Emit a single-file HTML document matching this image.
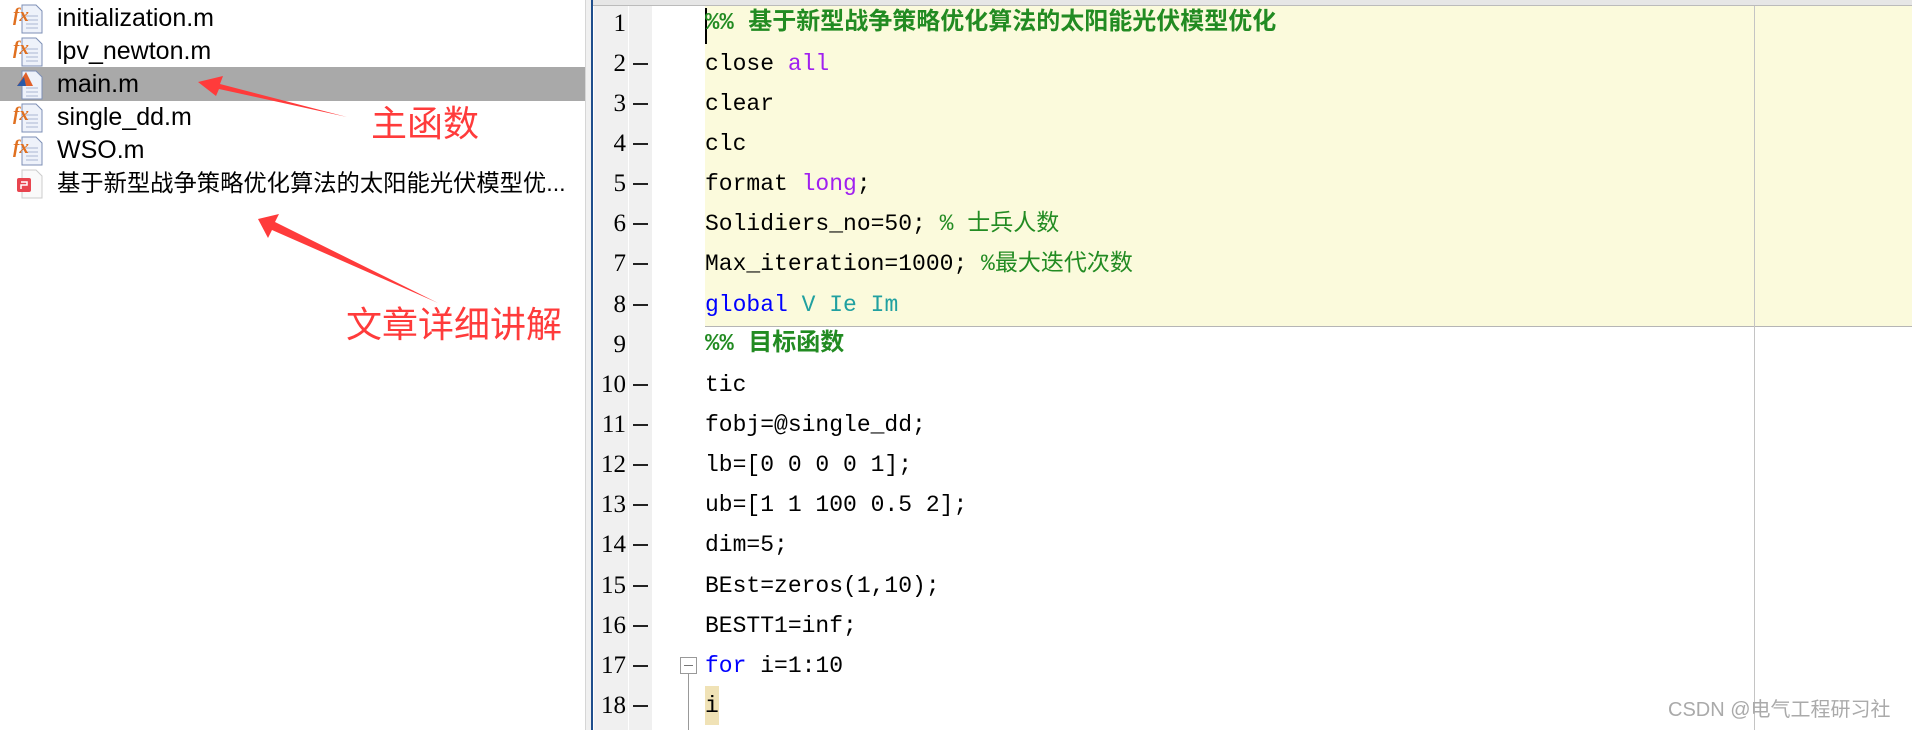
<!DOCTYPE html>
<html><head><meta charset="utf-8"><style>
*{margin:0;padding:0;box-sizing:border-box}
body{width:1912px;height:730px;overflow:hidden;background:#fff;position:relative;font-family:"Liberation Sans","Noto Sans CJK SC",sans-serif}
.abs{position:absolute}
.row{position:absolute;left:0;width:586px;height:33px;font-size:25px;line-height:33px;color:#000}
.row span{position:absolute;left:57px;top:0;white-space:nowrap}
.ico{position:absolute;left:13px;top:1px;width:32px;height:32px}
.ln{position:absolute;left:594px;width:32px;text-align:right;font-family:"Liberation Serif","Noto Serif CJK SC",serif;font-size:25px;height:40px;line-height:40px}
.dash{position:absolute;left:633px;width:15px;height:2px;background:#222}
.code{position:absolute;left:705px;font-family:"Liberation Mono","Noto Sans CJK SC",monospace;font-size:23px;height:40px;line-height:40px;white-space:pre;color:#000}
.g{color:#228B22}.p{color:#A020F0}.b{color:#0000FF}.t{color:#20A0A0}
</style></head><body>
<div class="abs" style="left:0;top:67px;width:586px;height:34px;background:#a9a9a9"></div>
<div class="abs" style="left:585px;top:0;width:1px;height:730px;background:#d6d6d6"></div>
<div class="abs" style="left:586px;top:0;width:5px;height:730px;background:#f0f0f0"></div>
<div class="abs" style="left:591px;top:0;width:2px;height:730px;background:#1f4e8c"></div>

<svg width="0" height="0" style="position:absolute"><defs>
<g id="fx"><path d="M9 2h14l6 6v22H9z" fill="#eef2fa" stroke="#7d8fb5"/><path d="M13 13h12M13 17h12M13 21h12M13 25h12" stroke="#a9b6d3"/><text x="0" y="18" font-family="Liberation Serif" font-style="italic" font-weight="bold" font-size="19" fill="#e07020">fx</text></g>
</defs></svg>

<div class="row" style="top:2px"><svg class="ico"><use href="#fx"/></svg><span>initialization.m</span></div>
<div class="row" style="top:35px"><svg class="ico"><use href="#fx"/></svg><span>lpv_newton.m</span></div>
<div class="row" style="top:68px"><svg class="ico"><path d="M9 2h14l6 6v22H9z" fill="#eef2fa" stroke="#7d8fb5"/><path d="M13 19h12M13 23h12M13 27h12" stroke="#a9b6d3"/><path d="M4 17L13 3l7 14z" fill="#e0602a"/><path d="M4 17L11 8l2 9z" fill="#2a5aa8"/></svg><span>main.m</span></div>
<div class="row" style="top:101px"><svg class="ico"><use href="#fx"/></svg><span>single_dd.m</span></div>
<div class="row" style="top:134px"><svg class="ico"><use href="#fx"/></svg><span>WSO.m</span></div>
<div class="row" style="top:167px"><svg class="ico"><path d="M9 2h14l6 6v22H9z" fill="#fafafa" stroke="#ccc"/><rect x="4" y="10" width="14" height="14" rx="2" fill="#e8454f"/><path d="M8 14h6v3h-6v4" stroke="#fff" fill="none" stroke-width="1.5"/></svg><span style="font-size:23.3px">基于新型战争策略优化算法的太阳能光伏模型优...</span></div>

<svg class="abs" style="left:0;top:0" width="590" height="360">
<path d="M347 117 L220 84 L223 76 L198 82 L216 96 L219 89 Z" fill="#ff3b3b"/>
<path d="M438 303 L275 222 L279 214 L258 219 L268 238 L272 230 Z" fill="#ff3b3b"/>
</svg>
<div class="abs" style="left:371px;top:99px;font-size:36px;line-height:44px;color:#ff3b3b;font-family:'Noto Sans CJK SC',sans-serif">主函数</div>
<div class="abs" style="left:346px;top:300px;font-size:36px;line-height:44px;color:#ff3b3b;font-family:'Noto Sans CJK SC',sans-serif">文章详细讲解</div>

<div class="abs" style="left:593px;top:0;width:1319px;height:6px;background:#e6e6e6;border-bottom:1px solid #bbb"></div>
<div class="abs" style="left:594px;top:6px;width:58px;height:724px;background:#f0f0f0"></div>
<div class="abs" style="left:628px;top:6px;width:1px;height:724px;background:#fff"></div>
<div class="abs" style="left:705px;top:6px;width:1207px;height:321px;background:#fbfadc;border-bottom:1px solid #b5b5b5"></div>
<div class="abs" style="left:1754px;top:6px;width:1px;height:724px;background:#c4c4c4"></div>
<div class="abs" style="left:705px;top:8px;width:2px;height:36px;background:#000"></div>

<div class="ln" style="top:4px">1</div>
<div class="ln" style="top:44px">2</div><div class="dash" style="top:63px"></div>
<div class="ln" style="top:84px">3</div><div class="dash" style="top:103px"></div>
<div class="ln" style="top:124px">4</div><div class="dash" style="top:143px"></div>
<div class="ln" style="top:164px">5</div><div class="dash" style="top:183px"></div>
<div class="ln" style="top:204px">6</div><div class="dash" style="top:223px"></div>
<div class="ln" style="top:244px">7</div><div class="dash" style="top:263px"></div>
<div class="ln" style="top:285px">8</div><div class="dash" style="top:304px"></div>
<div class="ln" style="top:325px">9</div>
<div class="ln" style="top:365px">10</div><div class="dash" style="top:384px"></div>
<div class="ln" style="top:405px">11</div><div class="dash" style="top:424px"></div>
<div class="ln" style="top:445px">12</div><div class="dash" style="top:464px"></div>
<div class="ln" style="top:485px">13</div><div class="dash" style="top:504px"></div>
<div class="ln" style="top:525px">14</div><div class="dash" style="top:544px"></div>
<div class="ln" style="top:566px">15</div><div class="dash" style="top:585px"></div>
<div class="ln" style="top:606px">16</div><div class="dash" style="top:625px"></div>
<div class="ln" style="top:646px">17</div><div class="dash" style="top:665px"></div>
<div class="ln" style="top:686px">18</div><div class="dash" style="top:705px"></div>

<div class="code g" style="top:4px;font-weight:bold;font-size:24px">%% 基于新型战争策略优化算法的太阳能光伏模型优化</div>
<div class="code" style="top:44px">close <span class="p">all</span></div>
<div class="code" style="top:84px">clear</div>
<div class="code" style="top:124px">clc</div>
<div class="code" style="top:164px">format <span class="p">long</span>;</div>
<div class="code" style="top:204px">Solidiers_no=50; <span class="g">% 士兵人数</span></div>
<div class="code" style="top:244px">Max_iteration=1000; <span class="g">%最大迭代次数</span></div>
<div class="code" style="top:285px"><span class="b">global</span> <span class="t">V Ie Im</span></div>
<div class="code g" style="top:325px;font-weight:bold;font-size:24px">%% 目标函数</div>
<div class="code" style="top:365px">tic</div>
<div class="code" style="top:405px">fobj=@single_dd;</div>
<div class="code" style="top:445px">lb=[0 0 0 0 1];</div>
<div class="code" style="top:485px">ub=[1 1 100 0.5 2];</div>
<div class="code" style="top:525px">dim=5;</div>
<div class="code" style="top:566px">BEst=zeros(1,10);</div>
<div class="code" style="top:606px">BESTT1=inf;</div>
<div class="code" style="top:646px"><span class="b">for</span> i=1:10</div>
<div class="abs" style="left:705px;top:686px;width:14px;height:39px;background:#f0e2b6"></div>
<div class="code" style="top:686px">i</div>
<div class="abs" style="left:680px;top:657px;width:17px;height:17px;border:1px solid #999;background:#fff"></div>
<div class="abs" style="left:684px;top:665px;width:9px;height:1px;background:#777"></div>
<div class="abs" style="left:688px;top:674px;width:1px;height:56px;background:#999"></div>

<div class="abs" style="left:1668px;top:697px;font-size:20px;line-height:26px;color:#aaa">CSDN @电气工程研习社</div>
</body></html>
